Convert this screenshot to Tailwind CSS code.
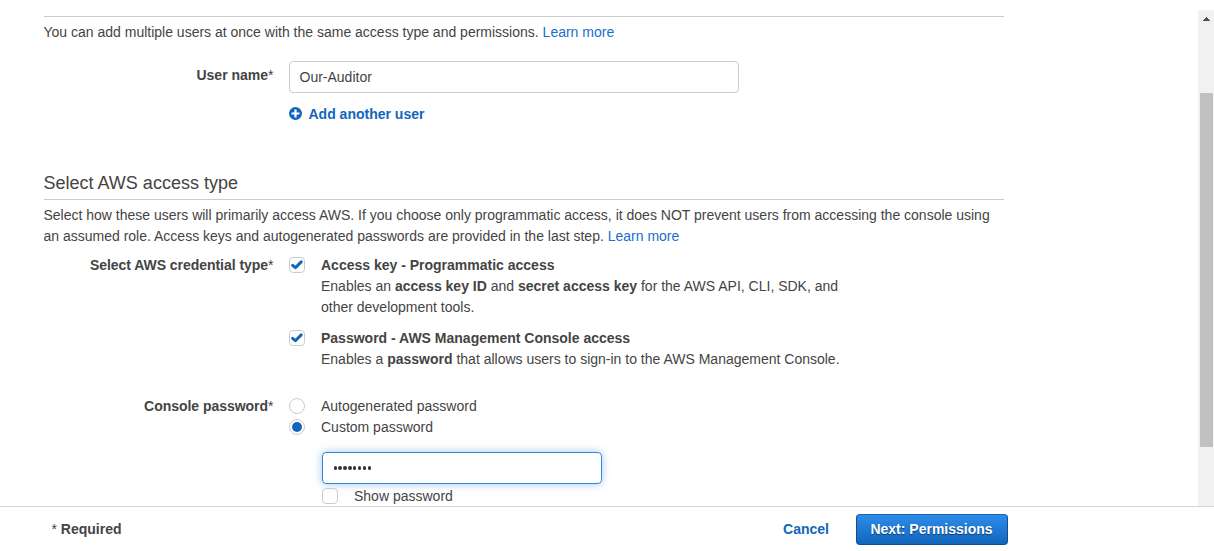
<!DOCTYPE html>
<html lang="en">
<head>
<meta charset="utf-8">
<title>Add user</title>
<script src="https://cdn.jsdelivr.net/npm/@tailwindcss/browser@4"></script>
</head>
<body class="flex h-[551px] w-[1214px] flex-col overflow-hidden bg-white text-[14px] leading-[21px] text-[#444]" style="font-family:'Liberation Sans',Arial,sans-serif">
<div class="flex h-[506px] shrink-0 overflow-hidden">
  <main class="flex-1 pl-[43.5px] pt-4">
    <div class="w-[960px]">
      <section class="border-t border-[#ccc] pt-[5px]">
        <p>You can add multiple users at once with the same access type and permissions. <a class="text-[#1a6fc9]">Learn more</a></p>
        <div class="mt-[18px] flex">
          <div class="w-[230px] shrink-0 pt-1 text-right"><b>User name</b>*</div>
          <div class="ml-[15.5px]">
            <div class="flex h-8 w-[450px] items-center rounded-[4px] border border-[#ccc] px-[9.5px]">Our-Auditor</div>
            <a class="mt-[11px] flex items-center font-bold text-[#1166bb]">
              <svg class="-ml-[0.5px] mr-[7px] mb-[2px] size-[13px]" viewBox="0 0 13 13"><circle cx="6.5" cy="6.5" r="6.5" fill="#1166bb"/><path d="M6.5 2.5v8M2.5 6.5h8" stroke="#fff" stroke-width="2.2"/></svg>Add another user</a>
          </div>
        </div>
      </section>
      <section class="mt-[47px]">
        <h2 class="flex h-[28px] items-start border-b border-[#ccc] pt-px text-[18px]">Select AWS access type</h2>
        <p class="mt-[5px]">Select how these users will primarily access AWS. If you choose only programmatic access, it does NOT prevent users from accessing the console using<br>an assumed role. Access keys and autogenerated passwords are provided in the last step. <a class="text-[#1a6fc9]">Learn more</a></p>
        <div class="mt-2 flex">
          <div class="w-[230px] shrink-0 text-right"><b class="tracking-[-0.04px]">Select AWS credential type</b>*</div>
          <div class="ml-[15.5px]">
            <div class="flex gap-4">
              <span class="mt-[2px] flex size-4 shrink-0 items-center justify-center rounded-[4px] border border-[#ccc]"><svg class="size-[14px]" viewBox="0 0 14 14"><path d="M2.6 7.4L5.4 9.7L11.2 3.9" fill="none" stroke="#1166bb" stroke-width="3" stroke-linecap="round" stroke-linejoin="round"/></svg></span>
              <div><b>Access key - Programmatic access</b><br>Enables an <b>access key ID</b> and <b>secret access key</b> for the AWS API, CLI, SDK, and<br>other development tools.</div>
            </div>
            <div class="mt-[10px] flex gap-4">
              <span class="mt-[2px] flex size-4 shrink-0 items-center justify-center rounded-[4px] border border-[#ccc]"><svg class="size-[14px]" viewBox="0 0 14 14"><path d="M2.6 7.4L5.4 9.7L11.2 3.9" fill="none" stroke="#1166bb" stroke-width="3" stroke-linecap="round" stroke-linejoin="round"/></svg></span>
              <div><b>Password - AWS Management Console access</b><br>Enables a <b>password</b> that allows users to sign-in to the AWS Management Console.</div>
            </div>
          </div>
        </div>
        <div class="mt-[26px] flex">
          <div class="w-[230px] shrink-0 text-right"><b class="tracking-[-0.03px]">Console password</b>*</div>
          <div class="ml-[15.5px]">
            <div class="flex gap-4"><span class="mt-[2px] size-4 rounded-full border border-[#ccc]"></span>Autogenerated password</div>
            <div class="flex gap-4"><span class="mt-[2px] flex size-4 items-center justify-center rounded-full border border-[#ccc]"><span class="size-[10px] rounded-full bg-[#1166bb]"></span></span>Custom password</div>
            <div class="ml-[33px] mt-[14px] flex h-8 w-[280px] items-center gap-[1.5px] rounded-[4px] border border-[#3184db] pl-[10.5px] shadow-[0_0_8px_rgba(49,132,219,0.45)]">
              <span class="size-[3.4px] rounded-full bg-[#333]"></span><span class="size-[3.4px] rounded-full bg-[#333]"></span><span class="size-[3.4px] rounded-full bg-[#333]"></span><span class="size-[3.4px] rounded-full bg-[#333]"></span><span class="size-[3.4px] rounded-full bg-[#333]"></span><span class="size-[3.4px] rounded-full bg-[#333]"></span><span class="size-[3.4px] rounded-full bg-[#333]"></span><span class="size-[3.4px] rounded-full bg-[#333]"></span>
            </div>
            <div class="ml-[33px] mt-[2px] flex gap-4"><span class="mt-[2px] size-4 rounded-[4px] border border-[#ccc]"></span>Show password</div>
          </div>
        </div>
      </section>
    </div>
  </main>
  <div class="mt-[10px] w-4 bg-[#f1f1f1] pl-[2px] pt-[7px]">
    <svg class="ml-[3px] block h-[4px] w-[7px]" viewBox="0 0 7 4" shape-rendering="crispEdges"><path d="M3 0h1v1h1v1h1v1h1v1H0V3h1V2h1V1h1z" fill="#505050"/></svg>
    <div class="mt-[72px] h-[354px] w-[13px] bg-[#c1c1c1]"></div>
  </div>
</div>
<footer class="flex h-[45px] shrink-0 items-start border-t border-[#d3d3d3] pl-[51.5px] pr-[206px] pt-[7px]">
  <div class="pt-[5px]">* <b>Required</b></div>
  <a class="ml-auto mr-[27px] pt-[5px] font-bold text-[#1166bb]">Cancel</a>
  <button class="h-[31px] w-[152px] rounded-[4px] border border-[#0e4f94] border-t-[#1b62b0] bg-linear-to-b from-[#2d8cea] to-[#1166bb] pb-px pr-px font-bold text-white [text-shadow:0_1px_1px_#0a3a70]">Next: Permissions</button>
</footer>
</body>
</html>
